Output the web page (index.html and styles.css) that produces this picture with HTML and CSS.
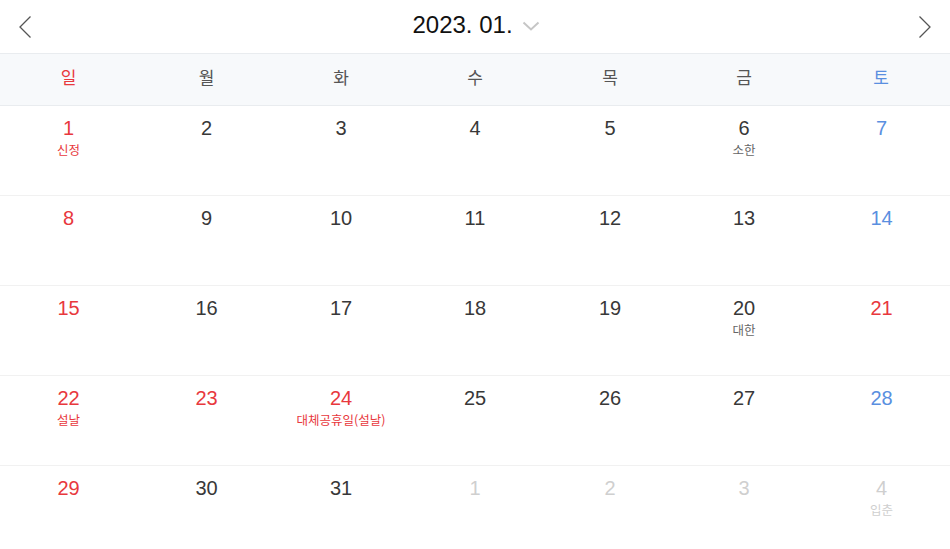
FILE: index.html
```html
<!DOCTYPE html>
<html lang="ko">
<head>
<meta charset="utf-8">
<link rel="stylesheet" href="styles.css">
</head>
<body>
<div class="cal">
  <div class="head">
    <button class="nav"><svg width="14" height="24" viewBox="0 0 14 24"><path d="M12.5 1.5 L2 12 L12.5 22.5" fill="none" stroke="#555" stroke-width="1.3"/></svg></button>
    <div class="title"><span>2023. 01.</span><svg class="caret" width="18" height="10" viewBox="0 0 18 10"><path d="M1.5 1.5 L9 8.5 L16.5 1.5" fill="none" stroke="#c6c6c6" stroke-width="2"/></svg></div>
    <button class="nav"><svg width="14" height="24" viewBox="0 0 14 24"><path d="M1.5 1.5 L12 12 L1.5 22.5" fill="none" stroke="#555" stroke-width="1.3"/></svg></button>
  </div>
  <div class="week-head">
    <div class="sun">일</div><div>월</div><div>화</div><div>수</div><div>목</div><div>금</div><div class="sat">토</div>
  </div>
  <div class="grid">
    <div class="day sun"><b>1</b><i>신정</i></div><div class="day"><b>2</b></div><div class="day"><b>3</b></div><div class="day"><b>4</b></div><div class="day"><b>5</b></div><div class="day"><b>6</b><i class="gray">소한</i></div><div class="day sat"><b>7</b></div>
    <div class="day sun"><b>8</b></div><div class="day"><b>9</b></div><div class="day"><b>10</b></div><div class="day"><b>11</b></div><div class="day"><b>12</b></div><div class="day"><b>13</b></div><div class="day sat"><b>14</b></div>
    <div class="day sun"><b>15</b></div><div class="day"><b>16</b></div><div class="day"><b>17</b></div><div class="day"><b>18</b></div><div class="day"><b>19</b></div><div class="day"><b>20</b><i class="gray">대한</i></div><div class="day sun"><b>21</b></div>
    <div class="day sun"><b>22</b><i>설날</i></div><div class="day sun"><b>23</b></div><div class="day sun"><b>24</b><i>대체공휴일(설날)</i></div><div class="day"><b>25</b></div><div class="day"><b>26</b></div><div class="day"><b>27</b></div><div class="day sat"><b>28</b></div>
    <div class="day sun"><b>29</b></div><div class="day"><b>30</b></div><div class="day"><b>31</b></div><div class="day other"><b>1</b></div><div class="day other"><b>2</b></div><div class="day other"><b>3</b></div><div class="day other"><b>4</b><i>입춘</i></div>
  </div>
</div>
</body>
</html>
```

FILE: styles.css
```css
* { box-sizing: border-box; }
html, body { margin: 0; padding: 0; background: #fff; }
body { font-family: "Liberation Sans", "Noto Sans CJK KR", sans-serif; color: #333; width: 950px; height: 549px; overflow: hidden; }
.cal { width: 950px; }
.head { height: 53px; display: flex; align-items: center; justify-content: space-between; padding: 0 18px 0 18px; }
.nav { background: none; border: 0; padding: 0; width: 14px; height: 24px; display: flex; }
.title { display: flex; align-items: center; gap: 9px; font-size: 24px; color: #111; margin-left: 2px; padding-bottom: 3px; }
.title .caret { margin-top: 2px; }
.week-head { height: 53px; background: #f7f9fb; border-top: 1px solid #e9ecef; border-bottom: 1px solid #e9ecef; display: grid; grid-template-columns: 137px 139px 130px 138px 132px 136px 138px; align-items: center; text-align: center; font-family: "Noto Sans CJK KR", sans-serif; font-size: 17px; color: #555; padding-bottom: 6px; }
.week-head .sun { color: #e8383d; }
.week-head .sat { color: #5a8fe0; }
.grid { display: grid; grid-template-columns: 137px 139px 130px 138px 132px 136px 139px; grid-auto-rows: 90px; }
.day { border-bottom: 1px solid #f1f1f1; display: flex; flex-direction: column; align-items: center; padding-top: 11px; }
.grid .day:nth-last-child(-n+7) { border-bottom: 0; }
.day b { font-weight: normal; font-size: 20px; line-height: 22px; color: #383838; }
.day i { font-style: normal; font-family: "Noto Sans CJK KR", sans-serif; font-size: 12.5px; line-height: 18px; margin-top: 2px; color: #e8383d; }
.day i.gray { color: #666; }
.day.sun b { color: #e8383d; }
.day.sat b { color: #5a8fe0; }
.day.other b, .day.other i { color: #cfcfcf; }
```
